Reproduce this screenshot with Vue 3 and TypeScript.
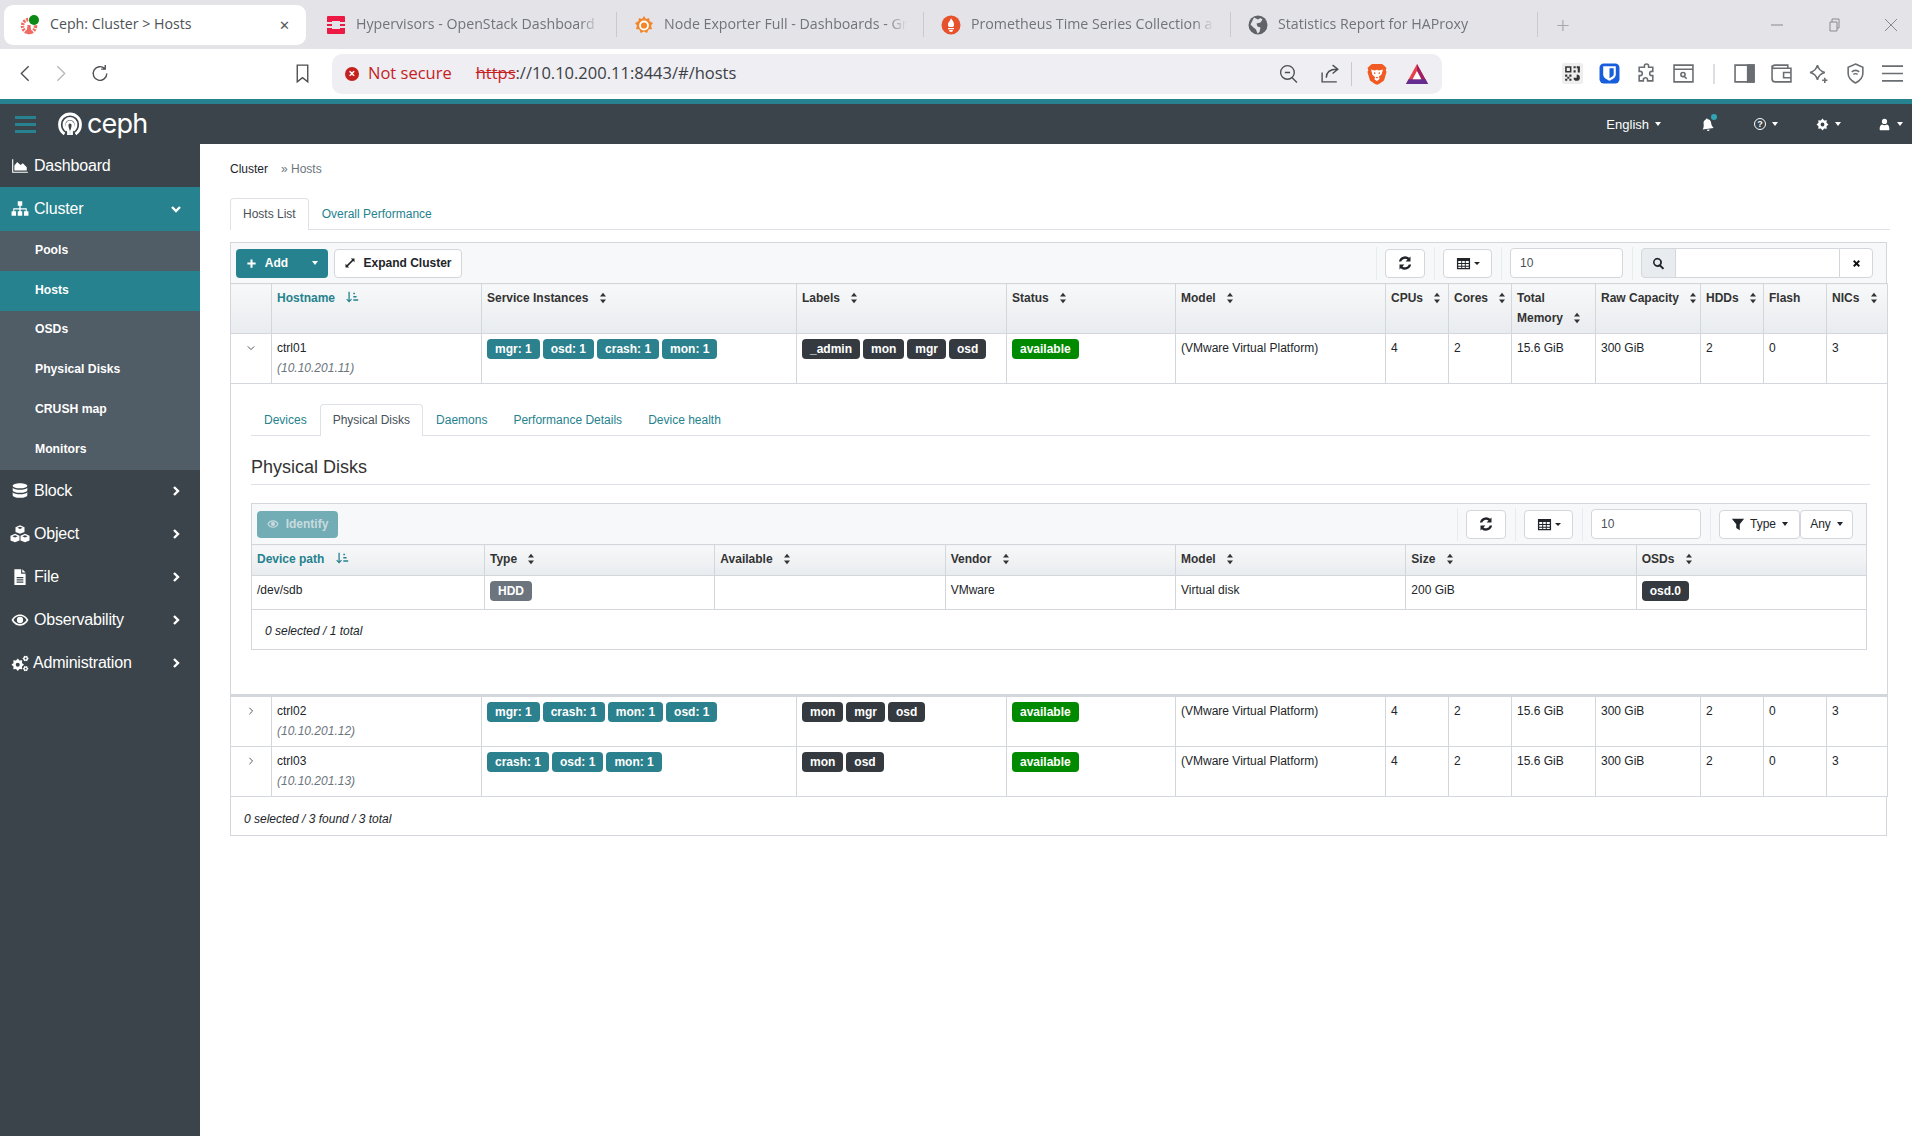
<script setup lang="ts">
// Ceph dashboard, Cluster > Hosts, inside a Brave browser window
interface BrowserTab { title: string; icon: string; active?: boolean }
interface Host {
  name: string
  ip: string
  services: string[]
  labels: string[]
  expanded?: boolean
}

// titles stop where the browser cuts them off
const tabs: BrowserTab[] = [
  { title: 'Ceph: Cluster > Hosts', icon: 'ceph', active: true },
  { title: 'Hypervisors - OpenStack Dashboard', icon: 'openstack' },
  { title: 'Node Exporter Full - Dashboards - Gr', icon: 'grafana' },
  { title: 'Prometheus Time Series Collection ar', icon: 'prometheus' },
  { title: 'Statistics Report for HAProxy', icon: 'globe' },
]

// builds a gear outline so the cog icons stay readable at small sizes
function gear(cx: number, cy: number, r: number, teeth: number): string {
  let d = ''
  for (let i = 0; i < teeth * 2; i++) {
    const a = (i * Math.PI) / teeth
    const rr = i % 2 ? r * 0.72 : r
    d += `${i ? 'L' : 'M'}${(cx + rr * Math.cos(a)).toFixed(2)} ${(cy + rr * Math.sin(a)).toFixed(2)}`
  }
  const h = r * 0.32
  return `${d}z M${cx - h} ${cy}a${h} ${h} 0 1 0 ${h * 2} 0a${h} ${h} 0 1 0 ${-h * 2} 0z`
}

const icons: Record<string, string> = {
  area: 'M1 2h1v11h13v1H1z M3 12V7.5l2.5-3 3 2.5 2-1.5 3.5 3.5V12z',
  sitemap: 'M6 1h4v4H8.6v2.4H14V10h1.5v4h-4v-4H13V8.4H8.6V10H10v4H6v-4h1.4V8.4H3V10h1.5v4h-4v-4H2V7.4h5.4V5H6z',
  database: 'M8 1c3.6 0 6.5 1 6.5 2.3S11.6 5.6 8 5.6 1.5 4.6 1.5 3.3 4.4 1 8 1z M1.5 5c1 1.2 3.6 1.9 6.5 1.9S13.5 6.2 14.5 5v2.3C14.5 8.6 11.6 9.6 8 9.6S1.5 8.6 1.5 7.3z M1.5 9c1 1.2 3.6 1.9 6.5 1.9s5.5-.7 6.5-1.9v2.7C14.5 13 11.6 14 8 14s-6.5-1-6.5-2.3z',
  cubes: 'M8 1l3.6 1.5V6.3L8 7.8 4.4 6.3V2.5z M8 2.2L5.9 3 8 3.9 10.1 3z M4 7.8l3.6 1.5v3.8L4 14.6.4 13.1V9.3z M4 9L1.9 9.8 4 10.7 6.1 9.8z M12 7.8l3.6 1.5v3.8L12 14.6l-3.6-1.5V9.3z M12 9l-2.1.8 2.1.9 2.1-.9z',
  file: 'M3 1h6v4h4v10H3z M5 8v1h6V8z M5 10v1h6v-1z M5 12v1h6v-1z M10 1l3 3h-3z',
  eye: 'M8 3C4.5 3 1.8 5.3.5 8c1.3 2.7 4 5 7.5 5s6.2-2.3 7.5-5C14.2 5.3 11.5 3 8 3z M8 4.5c2.4 0 4.6 1.4 5.8 3.5-1.2 2.1-3.4 3.5-5.8 3.5S3.4 10.1 2.2 8C3.4 5.9 5.6 4.5 8 4.5z M8 5.2a2.8 2.8 0 1 1 0 5.6 2.8 2.8 0 0 1 0-5.6z',
  cogs: `${gear(6, 9.5, 5.6, 8)} ${gear(13, 4, 2.8, 6)} ${gear(13, 13, 2.6, 6)}`,
  gear: gear(8, 8, 7.4, 8),
  refresh: 'M13.5 1.5v5H8.6l1.9-1.9A4 4 0 0 0 4.2 6.5H1.9a6.3 6.3 0 0 1 10.3-3.7z M2.5 14.5v-5h4.9l-1.9 1.9a4 4 0 0 0 6.3-1.9h2.3a6.3 6.3 0 0 1-10.3 3.7z',
  table: 'M1 2h14v12H1z M2.4 5.4v2h3.2v-2z M6.6 5.4v2h2.8v-2z M10.4 5.4v2h3.2v-2z M2.4 8.4v2h3.2v-2z M6.6 8.4v2h2.8v-2z M10.4 8.4v2h3.2v-2z M2.4 11.4v1.4h3.2v-1.4z M6.6 11.4v1.4h2.8v-1.4z M10.4 11.4v1.4h3.2v-1.4z',
  times: 'M3 5l2-2 3 3 3-3 2 2-3 3 3 3-2 2-3-3-3 3-2-2 3-3z',
  plus: 'M6.5 2h3v4.5H14v3H9.5V14h-3V9.5H2v-3h4.5z',
  expand: 'M9 2h5v5l-1.8-1.8-7 7L7 14H2V9l1.8 1.8 7-7z',
  filter: 'M1 2h14L10 8.2V15l-4-2.4V8.2z',
  sort: 'M8 1l4 5H4z M8 15l-4-5h8z',
  sortAmount: 'M3 1h1.6v10.3l1.7-1.7 1 1L3.8 14 .3 10.6l1-1L3 11.3z M9 2h2v2H9z M9 6h4v2H9z M9 10h6v2H9z',
  search: 'M6.6 1a5.6 5.6 0 0 1 4.5 8.9l3.9 3.9-1.7 1.7-3.9-3.9A5.6 5.6 0 1 1 6.6 1z M6.6 3.2a3.4 3.4 0 1 0 0 6.8 3.4 3.4 0 0 0 0-6.8z',
  user: 'M8 1a3.2 3.2 0 1 1 0 6.4A3.2 3.2 0 0 1 8 1z M3 15c-.6 0-1-.4-1-1 0-3 1-6 3-6 .8.7 1.8 1 3 1s2.2-.3 3-1c2 0 3 3 3 6 0 .6-.4 1-1 1z',
  bell: 'M8 1.5c.6 0 1 .4 1 1 2 .5 3 2 3 4 0 3 .6 4.5 2 6H2c1.4-1.5 2-3 2-6 0-2 1-3.5 3-4 0-.6.4-1 1-1z M6.5 13.5h3a1.5 1.5 0 0 1-3 0z',
}

const sideTop = { label: 'Dashboard', icon: 'area' }
const clusterLinks = ['Pools', 'Hosts', 'OSDs', 'Physical Disks', 'CRUSH map', 'Monitors']
const sideBottom = [
  { label: 'Block', icon: 'database' },
  { label: 'Object', icon: 'cubes' },
  { label: 'File', icon: 'file' },
  { label: 'Observability', icon: 'eye' },
  { label: 'Administration', icon: 'cogs' },
]

const hostColumns = [
  { label: '', width: 41 },
  { label: 'Hostname', width: 210, sorted: true },
  { label: 'Service Instances', width: 315 },
  { label: 'Labels', width: 210 },
  { label: 'Status', width: 169 },
  { label: 'Model', width: 210 },
  { label: 'CPUs', width: 63 },
  { label: 'Cores', width: 63 },
  { label: 'Total Memory', width: 84 },
  { label: 'Raw Capacity', width: 105 },
  { label: 'HDDs', width: 63 },
  { label: 'Flash', width: 63, noSort: true },
  { label: 'NICs', width: 61 },
]

const hosts: Host[] = [
  { name: 'ctrl01', ip: '10.10.201.11', services: ['mgr: 1', 'osd: 1', 'crash: 1', 'mon: 1'], labels: ['_admin', 'mon', 'mgr', 'osd'], expanded: true },
  { name: 'ctrl02', ip: '10.10.201.12', services: ['mgr: 1', 'crash: 1', 'mon: 1', 'osd: 1'], labels: ['mon', 'mgr', 'osd'] },
  { name: 'ctrl03', ip: '10.10.201.13', services: ['crash: 1', 'osd: 1', 'mon: 1'], labels: ['mon', 'osd'] },
]

const detailTabs = ['Devices', 'Physical Disks', 'Daemons', 'Performance Details', 'Device health']
const diskColumns = ['Device path', 'Type', 'Available', 'Vendor', 'Model', 'Size', 'OSDs']
</script>

<template>
  <div class="window">
    <!-- Browser tabs -->
    <div class="tabstrip">
      <div v-for="tab in tabs" :key="tab.title" class="btab" :class="{ active: tab.active }">
        <svg v-if="tab.icon === 'ceph'" class="favicon" viewBox="0 0 20 20">
          <circle cx="9" cy="11" r="6.5" fill="none" stroke="#ef6a63" stroke-width="3.5" stroke-dasharray="2 1" />
          <path d="M7.5 10h3l1 9h-5z" fill="#ef6a63" />
          <circle cx="14" cy="5" r="5" fill="#0a8a14" />
        </svg>
        <svg v-else-if="tab.icon === 'openstack'" class="favicon" viewBox="0 0 20 20">
          <path d="M2 1h16a1 1 0 0 1 1 1v5h-5V6H6v1H1V2a1 1 0 0 1 1-1z M1 9h5v2H1z M14 9h5v2h-5z M1 13h5v1h8v-1h5v5a1 1 0 0 1-1 1H2a1 1 0 0 1-1-1z" fill="#ed1944" />
        </svg>
        <svg v-else-if="tab.icon === 'grafana'" class="favicon" viewBox="0 0 20 20">
          <path d="M10 1l2 3 3-1 .6 3.2L19 8l-2 2.6L18 14l-3.4.5L13 18l-3-1.6L6.5 18l-1-3.5L2 14l1-3.4L1 8l3.4-1.8L5 3l3 1z" fill="#f1872d" />
          <circle cx="10" cy="10.5" r="4" fill="none" stroke="#fff" stroke-width="1.8" />
        </svg>
        <svg v-else-if="tab.icon === 'prometheus'" class="favicon" viewBox="0 0 20 20">
          <circle cx="10" cy="10" r="9.5" fill="#e6522c" />
          <path d="M10 3c.5 2 3 3 3 6.5 0 1-.3 2-1 2.5H8c-.7-.5-1-1.5-1-2.5C7 7 9.5 6 10 3z M7 13h6v1.3H7z M8 15h4a2 2 0 0 1-4 0z" fill="#fff" />
        </svg>
        <svg v-else class="favicon" viewBox="0 0 20 20">
          <circle cx="10" cy="10" r="9.5" fill="#5f6368" />
          <path d="M6 2.5l4 2 2.5-1.5 2 1.5-2 3-4 1 1 3 3 1-1 4.5-2 1.5-1.5-4-2.5-2-3-3z" fill="#e3e3e8" />
        </svg>
        <span class="btab-title">{{ tab.title }}</span>
        <span v-if="tab.active" class="btab-close">✕</span>
      </div>
      <span class="new-tab">+</span>
      <div class="win-controls">
        <svg viewBox="0 0 14 14"><path d="M1 7h12" /></svg>
        <svg viewBox="0 0 14 14"><path d="M3 4h7v9H3z M5 4V1h7v9h-2" /></svg>
        <svg viewBox="0 0 14 14"><path d="M1 1l12 12M13 1L1 13" /></svg>
      </div>
    </div>

    <!-- Address bar -->
    <div class="addressbar">
      <svg class="tb back" viewBox="0 0 20 20"><path d="M13 3l-7 7 7 7" /></svg>
      <svg class="tb forward" viewBox="0 0 20 20"><path d="M7 3l7 7-7 7" /></svg>
      <svg class="tb reload" viewBox="0 0 20 20"><path d="M16 10a6.5 6.5 0 1 1-2-4.7M14.5 2v3.8h-3.8" /></svg>
      <svg class="tb bookmark" viewBox="0 0 20 20"><path d="M5 2h10v16l-5-4-5 4z" /></svg>
      <div class="omnibox">
        <span class="warn-dot">×</span>
        <span class="not-secure">Not secure</span>
        <span class="url"><s>https</s>://10.10.200.11:8443/#/hosts</span>
        <svg class="tb zoomout" viewBox="0 0 20 20"><path d="M9 2.5a6.5 6.5 0 1 1 0 13 6.5 6.5 0 0 1 0-13zM6.5 9h5M13.5 14l4.500 4.500" /></svg>
        <svg class="tb share" viewBox="0 0 20 20"><path d="M2 9v9h14M6 14c0-5 3-8 10-8M12 2l5 4-5 4" /></svg>
        <span class="omni-sep"></span>
        <svg class="brave" viewBox="0 0 20 22">
          <path d="M5 1h10l2 1.500L19.500 5l-.8 2 .8 2-2.500 8.500-5 3.500-2 .8-2-.8-5-3.500L.5 9l.8-2-.8-2L3 2.500z" fill="#f15a22" />
          <path d="M4 6.500l4 1 2-.8 2 .8 4-1-1.500 5-2.500 2 .5 2.500L10 18l-2.500-1.500.5-2.500-2.500-2z" fill="#fff" />
          <path d="M7 9l2 1.200-2 .8z M13 9l-2 1.200 2 .8z M8.500 14h3L10 15.500z" fill="#f15a22" />
        </svg>
        <svg class="bat" viewBox="0 0 22 20">
          <path d="M11 0l11 20H0z" fill="#e8414a" />
          <path d="M11 0l11 20h-5L11 9z" fill="#9e1f63" />
          <path d="M0 20l2.600-4.700h16.800L22 20z" fill="#662d91" />
          <path d="M11 7l4.400 8.300H6.600z" fill="#fff" />
        </svg>
      </div>
      <div class="extensions">
        <svg class="ext" viewBox="0 0 20 20">
          <rect width="20" height="20" rx="2" fill="#eeeeee" />
          <path d="M3 3h6v6H3z M4.500 4.500v3h3v-3z M11 3h2v2h-2z M14 3h3v6h-2V5h-1z M11 7h2v2h-2z M3 11h2v2H3z M7 11h2v2H7z M5 13h2v2H5z M3 15h2v2H3z M7 15h2v2H7z" fill="#333" fill-rule="evenodd" />
          <path d="M14 11a3 3 0 1 1-3 3h3z" fill="#333" />
        </svg>
        <svg class="ext" viewBox="0 0 20 20">
          <rect x="0.500" y="0.500" width="19" height="19" rx="4" fill="#175ddc" />
          <path d="M4 3h12v8c0 3-3 4.500-6 6-3-1.500-6-3-6-6z M10 5v9.500c2-1 4-2 4-3.700V5z" fill="#fff" fill-rule="evenodd" />
        </svg>
        <svg class="tb" viewBox="0 0 20 20"><path d="M8 3a2 2 0 0 1 4 0v1h4v4h-1a2 2 0 0 0 0 4h1v5h-5v-1a2 2 0 0 0-4 0v1H3v-5h1a2 2 0 0 0 0-4H3V4h5z" /></svg>
        <svg class="tb" viewBox="0 0 20 20"><path d="M1 2h18v16H1zM1 6h18M9.500 9a2 2 0 1 1 0 4 2 2 0 0 1 0-4zM11 13l2 2" /></svg>
        <span class="ext-sep"></span>
        <svg class="tb" viewBox="0 0 20 20"><path d="M1 2h18v16H1z" /><path d="M13 2h6v16h-6z" fill="#6a6d72" /></svg>
        <svg class="tb" viewBox="0 0 20 20"><path d="M1 5a3 3 0 0 1 3-3h12v3M1 5v10a3 3 0 0 0 3 3h15V5H4a3 3 0 0 1-3-1zM12 9h7v5h-7z" /></svg>
        <svg class="tb" viewBox="0 0 20 20"><path d="M9 2c1 4 3 6 7 7-4 1-6 3-7 7-1-4-3-6-7-7 4-1 6-3 7-7zM16 14v5M13.500 16.500h5" /></svg>
        <svg class="tb" viewBox="0 0 20 20"><path d="M10 1l7 3v6c0 4-3 7-7 9-4-2-7-5-7-9V4zM6.500 8.500c2-2 5-2 7 0M8 11c1-1 3-1 4 0" /></svg>
        <svg class="tb menu" viewBox="0 0 20 20"><path d="M0 3h20M0 10h20M0 17h20" /></svg>
      </div>
    </div>

    <!-- Dashboard header -->
    <header class="navbar">
      <div class="burger"><i></i><i></i><i></i></div>
      <svg class="ceph-logo" viewBox="0 0 24 24">
        <path d="M6.500 22C3.500 20 1.500 16.500 1.500 12.500a10.500 10.500 0 0 1 21 0c0 4-2 7.500-5 9.500" />
        <path d="M9 18.500c-1.800-1.400-3-3.500-3-6a6 6 0 0 1 12 0c0 2.500-1.200 4.600-3 6" />
        <path d="M10.500 23v-4c-.7-1.700-1.500-3-1.500-6a3 3 0 0 1 6 0c0 3-.8 4.300-1.500 6v4" />
      </svg>
      <span class="ceph-word">ceph</span>
      <nav class="nav-right">
        <span class="nav-lang">English<b class="caret"></b></span>
        <span class="nav-bell">
          <svg class="ic" viewBox="0 0 16 16"><path :d="icons.bell" /></svg>
          <i class="bell-dot"></i>
        </span>
        <span class="nav-help"><span class="help-ring">?</span><b class="caret"></b></span>
        <span class="nav-gear"><svg class="ic" viewBox="0 0 16 16"><path :d="icons.gear" fill-rule="evenodd" /></svg><b class="caret"></b></span>
        <span class="nav-user"><svg class="ic" viewBox="0 0 16 16"><path :d="icons.user" /></svg><b class="caret"></b></span>
      </nav>
    </header>

    <div class="body">
      <!-- Sidebar -->
      <aside class="sidebar">
        <a class="side-item">
          <svg class="side-ic" viewBox="0 0 16 16"><path :d="icons[sideTop.icon]" /></svg>
          {{ sideTop.label }}
        </a>
        <a class="side-item cluster">
          <svg class="side-ic" viewBox="0 0 16 16"><path :d="icons.sitemap" /></svg>
          Cluster
          <svg class="chev" viewBox="0 0 12 12"><path d="M2 4l4 4 4-4" /></svg>
        </a>
        <div class="side-sub">
          <a v-for="link in clusterLinks" :key="link" class="sub-item" :class="{ current: link === 'Hosts' }">{{ link }}</a>
        </div>
        <a v-for="item in sideBottom" :key="item.label" class="side-item">
          <svg class="side-ic" :class="'ic-' + item.icon" viewBox="0 0 16 16"><path :d="icons[item.icon]" fill-rule="evenodd" /></svg>
          {{ item.label }}
          <svg class="chev" viewBox="0 0 12 12"><path d="M4 2l4 4-4 4" /></svg>
        </a>
      </aside>

      <!-- Main content -->
      <main class="content">
        <div class="crumbs"><span>Cluster</span><em>» Hosts</em></div>

        <div class="tabs">
          <a class="tab selected">Hosts List</a>
          <a class="tab">Overall Performance</a>
        </div>

        <section class="hosts">
          <div class="toolbar">
            <div class="btn-split">
              <button class="btn primary add"><svg class="ic" viewBox="0 0 16 16"><path :d="icons.plus" /></svg>Add</button>
              <button class="btn primary drop"><b class="caret"></b></button>
            </div>
            <button class="btn light expand"><svg class="ic" viewBox="0 0 16 16"><path :d="icons.expand" /></svg>Expand Cluster</button>
            <div class="tools">
              <div class="tool"><button class="btn light icon-btn"><svg class="ic refresh" viewBox="0 0 16 16"><path :d="icons.refresh" /></svg></button></div>
              <div class="tool"><button class="btn light icon-btn cols"><svg class="ic table-ic" viewBox="0 0 16 16"><path :d="icons.table" fill-rule="evenodd" /></svg><b class="caret"></b></button></div>
              <div class="tool"><input class="limit" value="10" /></div>
              <div class="tool search-group">
                <span class="addon"><svg class="ic" viewBox="0 0 16 16"><path :d="icons.search" fill-rule="evenodd" /></svg></span>
                <input class="search" />
                <span class="clear"><svg class="ic" viewBox="0 0 16 16"><path :d="icons.times" /></svg></span>
              </div>
            </div>
          </div>

          <table class="grid">
            <colgroup>
              <col v-for="col in hostColumns" :key="col.label" :style="{ width: col.width + 'px' }" />
            </colgroup>
            <thead>
              <tr>
                <th v-for="col in hostColumns" :key="col.label" :class="{ on: col.sorted }">
                  {{ col.label }}
                  <svg v-if="col.sorted" class="sort-amount" viewBox="0 0 16 16"><path :d="icons.sortAmount" /></svg>
                  <svg v-else-if="col.label && !col.noSort" class="sort" viewBox="0 0 16 16"><path :d="icons.sort" /></svg>
                </th>
              </tr>
            </thead>
            <tbody>
              <template v-for="host in hosts" :key="host.name">
                <tr class="host-row">
                  <td class="toggle">
                    <svg viewBox="0 0 10 10"><path :d="host.expanded ? 'M1 3l4 4 4-4' : 'M3 1l4 4-4 4'" /></svg>
                  </td>
                  <td>{{ host.name }}<br /><em class="ip">({{ host.ip }})</em></td>
                  <td><div class="badges"><span v-for="s in host.services" :key="s" class="badge teal">{{ s }}</span></div></td>
                  <td><div class="badges"><span v-for="l in host.labels" :key="l" class="badge dark">{{ l }}</span></div></td>
                  <td><div class="badges"><span class="badge green">available</span></div></td>
                  <td>(VMware Virtual Platform)</td>
                  <td>4</td>
                  <td>2</td>
                  <td>15.6 GiB</td>
                  <td>300 GiB</td>
                  <td>2</td>
                  <td>0</td>
                  <td>3</td>
                </tr>
                <tr v-if="host.expanded" class="detail-row">
                  <td colspan="13">
                    <div class="tabs inner">
                      <a v-for="t in detailTabs" :key="t" class="tab" :class="{ selected: t === 'Physical Disks' }">{{ t }}</a>
                    </div>
                    <h3 class="legend">Physical Disks</h3>

                    <div class="disks">
                      <div class="toolbar">
                        <button class="btn identify"><svg class="ic" viewBox="0 0 16 16"><path :d="icons.eye" fill-rule="evenodd" /></svg>Identify</button>
                        <div class="tools">
                          <div class="tool"><button class="btn light icon-btn"><svg class="ic refresh" viewBox="0 0 16 16"><path :d="icons.refresh" /></svg></button></div>
                          <div class="tool"><button class="btn light icon-btn cols"><svg class="ic table-ic" viewBox="0 0 16 16"><path :d="icons.table" fill-rule="evenodd" /></svg><b class="caret"></b></button></div>
                          <div class="tool"><input class="limit narrow" value="10" /></div>
                          <div class="tool">
                            <button class="btn light type"><svg class="ic" viewBox="0 0 16 16"><path :d="icons.filter" /></svg>Type<b class="caret"></b></button>
                            <button class="btn light any">Any<b class="caret"></b></button>
                          </div>
                        </div>
                      </div>
                      <table class="grid sub">
                        <thead>
                          <tr>
                            <th v-for="(c, i) in diskColumns" :key="c" :class="{ on: i === 0 }">
                              {{ c }}
                              <svg v-if="i === 0" class="sort-amount" viewBox="0 0 16 16"><path :d="icons.sortAmount" /></svg>
                              <svg v-else class="sort" viewBox="0 0 16 16"><path :d="icons.sort" /></svg>
                            </th>
                          </tr>
                        </thead>
                        <tbody>
                          <tr>
                            <td>/dev/sdb</td>
                            <td><span class="badge gray">HDD</span></td>
                            <td></td>
                            <td>VMware</td>
                            <td>Virtual disk</td>
                            <td>200 GiB</td>
                            <td><span class="badge dark">osd.0</span></td>
                          </tr>
                        </tbody>
                      </table>
                      <div class="count nested">0 selected / 1 total</div>
                    </div>
                  </td>
                </tr>
              </template>
            </tbody>
          </table>
          <div class="count">0 selected / 3 found / 3 total</div>
        </section>
      </main>
    </div>
  </div>
</template>

<style>
html,
body {
  margin: 0;
  background: #fff;
}
</style>

<style scoped>
.window {
  display: flex;
  flex-direction: column;
  height: 100vh;
  overflow: hidden;
  font-family: "Liberation Sans", Arial, sans-serif;
  font-size: 12px;
  color: #212529;
}

/* browser chrome */
.tabstrip {
  display: flex;
  align-items: center;
  flex: none;
  height: 49px;
  padding-left: 4px;
  background: #e3e3e8;
  box-sizing: border-box;
  font-family: "Open Sans", sans-serif;
  font-size: 14.2px;
  color: #70747a;
}
.btab {
  display: flex;
  align-items: center;
  flex: 0 0 307px;
  min-width: 0;
  box-sizing: border-box;
  height: 25px;
  padding-left: 17px;
  border-right: 1px solid #cacace;
}
.btab:first-child {
  flex-basis: 302px;
  margin-right: 6px;
  height: 40px;
  padding: 0 14px 0 16px;
  background: #fff;
  border: 0;
  border-radius: 9px;
  color: #4e5257;
}
.btab:nth-child(2) {
  flex-basis: 305px;
  padding-left: 14px;
}
.favicon {
  flex: none;
  width: 20px;
  height: 20px;
  margin-right: 10px;
}
.btab-title {
  flex: 1;
  min-width: 0;
  white-space: nowrap;
  margin-right: 16px;
  padding-bottom: 2px;
  -webkit-mask-image: linear-gradient(to right, #000 92%, transparent);
  mask-image: linear-gradient(to right, #000 92%, transparent);
}
.active .btab-title {
  -webkit-mask-image: none;
  mask-image: none;
}
.btab-close {
  font-size: 13px;
  color: #55585c;
  margin-right: 2px;
}
.new-tab {
  margin-left: 18px;
  font-size: 24px;
  font-weight: 300;
  line-height: 1;
  color: #a6a6ab;
}
.win-controls {
  display: flex;
  gap: 43px;
  margin-left: auto;
  margin-right: 14px;
}
.win-controls svg {
  width: 14px;
  height: 14px;
  fill: none;
  stroke: #8a8a8e;
  stroke-width: 1;
}
.addressbar {
  display: flex;
  align-items: center;
  flex: none;
  height: 50px;
  background: #fff;
  box-sizing: border-box;
  padding-bottom: 1px;
}
.tb {
  flex: none;
  width: 21px;
  height: 21px;
  fill: none;
  stroke: #4b4d51;
  stroke-width: 1.3;
}
.back {
  margin-left: 15px;
}
.forward {
  margin-left: 14px;
  stroke: #b9b9bc;
}
.reload {
  margin-left: 19px;
}
.bookmark {
  margin-left: 181px;
}
.omnibox {
  display: flex;
  align-items: center;
  flex: none;
  width: 1110px;
  height: 40px;
  margin-left: 19px;
  box-sizing: border-box;
  padding-left: 13px;
  background: #eeeef3;
  border-radius: 10px;
  font-family: "Open Sans", sans-serif;
  font-size: 16.5px;
}
.warn-dot {
  flex: none;
  width: 14px;
  height: 14px;
  border-radius: 50%;
  background: #c5221f;
  color: #fff;
  font-size: 12px;
  font-weight: 700;
  line-height: 13px;
  text-align: center;
}
.not-secure {
  margin-left: 9px;
  padding-bottom: 2px;
  color: #c5221f;
}
.url {
  margin-left: 24px;
  padding-bottom: 2px;
  color: #3c4043;
}
.url s {
  color: #c5221f;
}
.zoomout {
  margin-left: auto;
}
.share {
  margin-left: 21px;
}
.omni-sep {
  width: 1px;
  height: 24px;
  margin: 0 15px 0 10px;
  background: #c9c9cd;
}
.brave {
  width: 20px;
  height: 22px;
}
.bat {
  width: 22px;
  height: 20px;
  margin: 0 14px 0 19px;
}
.extensions {
  display: flex;
  align-items: center;
  margin-left: 120px;
  gap: 16px;
}
.ext {
  flex: none;
  width: 21px;
  height: 21px;
}
.ext-sep {
  width: 2px;
  height: 20px;
  margin: 0 3px;
  background: #dedee2;
}
.extensions .tb {
  stroke: #6a6d72;
  stroke-width: 1.5;
}

/* dashboard header */
.navbar {
  display: flex;
  align-items: center;
  flex: none;
  box-sizing: border-box;
  height: 45px;
  border-top: 5px solid #25828e;
  background: #3a444a;
  color: #fff;
}
.burger {
  display: flex;
  flex-direction: column;
  gap: 4px;
  width: 21px;
  margin-left: 15px;
}
.burger i {
  display: block;
  height: 3px;
  background: #25828e;
}
.ceph-logo {
  width: 24px;
  height: 24px;
  margin-left: 22px;
  fill: none;
  stroke: #fff;
  stroke-width: 2.8;
}
.ceph-word {
  margin-left: 5px;
  font-family: Inter, sans-serif;
  font-size: 27px;
  line-height: 30px;
  letter-spacing: -0.8px;
}
.nav-right {
  display: flex;
  align-items: center;
  margin-left: auto;
  font-size: 13px;
}
.nav-right .ic {
  display: block;
  width: 13px;
  height: 13px;
  fill: #fff;
}
.nav-bell .ic {
  width: 15px;
  height: 15px;
  transform: rotate(-8deg);
}
.nav-right span {
  display: flex;
  align-items: center;
}
.caret {
  display: inline-block;
  width: 0;
  height: 0;
  margin-left: 6px;
  border-top: 4px solid currentColor;
  border-left: 3px solid transparent;
  border-right: 3px solid transparent;
}
.nav-bell {
  position: relative;
  margin-left: 39px;
}
.bell-dot {
  position: absolute;
  top: -3px;
  right: -2px;
  width: 6px;
  height: 6px;
  border-radius: 50%;
  background: #2fa5b5;
}
.nav-help {
  margin-left: 39px;
}
.help-ring {
  justify-content: center;
  width: 10px;
  height: 10px;
  border: 1px solid #fff;
  border-radius: 50%;
  font-size: 9px;
  font-weight: 700;
}
.nav-gear {
  margin-left: 38px;
}
.nav-user {
  margin-left: 37px;
  margin-right: 9px;
}

/* sidebar */
.body {
  display: flex;
  flex: 1;
  min-height: 0;
}
.sidebar {
  flex: none;
  width: 200px;
  background: #3a444a;
  color: #fff;
}
.side-item {
  display: flex;
  align-items: center;
  height: 43px;
  padding-left: 11px;
  font-size: 16px;
  letter-spacing: -0.2px;
}
.side-item.cluster {
  height: 44px;
  background: #25828e;
}
.side-ic {
  flex: none;
  width: 18px;
  height: 18px;
  margin-right: 5px;
  fill: #fff;
}
.side-ic.ic-cubes {
  width: 20px;
  height: 20px;
  margin-left: -1px;
  margin-right: 4px;
}
.side-ic.ic-cogs {
  margin-right: 4px;
}
.chev {
  width: 12px;
  height: 12px;
  margin-left: auto;
  margin-right: 18px;
  fill: none;
  stroke: #fff;
  stroke-width: 2.4;
}
.side-sub {
  background: #505c66;
}
.sub-item {
  display: flex;
  align-items: center;
  box-sizing: border-box;
  height: 39.8px;
  padding-left: 35px;
  padding-bottom: 2px;
  font-size: 12.2px;
  font-weight: 700;
}
.sub-item.current {
  background: #25828e;
}

/* main area */
.content {
  flex: 1;
  min-width: 0;
  padding-left: 30px;
  padding-right: 22px;
}
.crumbs {
  margin-top: 18px;
  line-height: 14px;
}
.crumbs em {
  margin-left: 13px;
  font-style: normal;
  color: #6c757d;
}
.tabs {
  display: flex;
  margin-top: 22px;
  border-bottom: 1px solid #dee2e6;
}
.tab {
  margin-bottom: -1px;
  padding: 0 12px;
  height: 30px;
  line-height: 31px;
  color: #25828e;
  border: 1px solid transparent;
  border-bottom: 0;
  border-radius: 4px 4px 0 0;
}
.tab.selected {
  height: 31px;
  background: #fff;
  border-color: #dee2e6;
  color: #495057;
}
.hosts {
  width: 1657px;
  margin-top: 12px;
}
.toolbar {
  display: flex;
  align-items: center;
  height: 41px;
  padding-left: 5px;
  box-sizing: border-box;
  background: #f7f8f9;
  border: 1px solid #d3d7db;
  border-bottom: 0;
}
.btn {
  box-sizing: border-box;
  height: 29px;
  font: inherit;
  border-radius: 4px;
  border: 1px solid transparent;
  display: inline-flex;
  align-items: center;
  justify-content: center;
}
.btn .ic {
  width: 12px;
  height: 12px;
  fill: currentColor;
}
.primary {
  background: #25828e;
  color: #fff;
  font-weight: 700;
}
.btn-split {
  display: flex;
  width: 92px;
}
.add {
  flex: 1;
  border-radius: 4px 0 0 4px;
  padding: 0;
}
.add .ic {
  margin-right: 8px;
  width: 11px;
  height: 11px;
}
.drop {
  width: 30px;
  border-radius: 0 4px 4px 0;
  padding: 0 0 0 4px;
}
.drop .caret {
  margin: 0;
}
.light {
  background: #fff;
  border-color: #d3d7db;
  color: #212529;
}
.expand {
  width: 128px;
  margin-left: 6px;
  font-weight: 700;
  padding: 0;
}
.expand .ic {
  margin-right: 7px;
}
.tools {
  display: flex;
  align-items: center;
  margin-left: auto;
  margin-right: 4px;
}
.tool {
  display: flex;
  padding: 0 9px 0 8px;
  height: 33px;
  align-items: center;
  border-left: 1px solid #e9ecef;
}
.icon-btn {
  width: 40px;
  padding: 0;
}
.icon-btn .refresh {
  width: 16px;
  height: 16px;
}
.cols {
  width: 49px;
}
.cols .caret {
  margin-left: 3px;
  border-top-width: 3px;
}
.table-ic {
  width: 15px !important;
  height: 15px !important;
}
.limit {
  box-sizing: border-box;
  width: 113px;
  height: 30px;
  padding: 0 9px;
  font: inherit;
  color: #495057;
  border: 1px solid #d3d7db;
  border-radius: 4px;
  outline: none;
}
.limit.narrow {
  width: 110px;
}
.search-group {
  box-sizing: border-box;
  width: 250px;
}
.addon {
  display: flex;
  align-items: center;
  justify-content: center;
  flex: none;
  width: 35px;
  height: 30px;
  box-sizing: border-box;
  background: #e9ecef;
  border: 1px solid #d3d7db;
  border-radius: 4px 0 0 4px;
}
.addon .ic {
  width: 13px;
  height: 13px;
  fill: #212529;
}
.search {
  flex: 1;
  min-width: 0;
  height: 30px;
  box-sizing: border-box;
  padding: 0;
  border: 1px solid #d3d7db;
  border-left: 0;
  border-right: 0;
  outline: none;
}
.clear {
  display: flex;
  align-items: center;
  justify-content: center;
  flex: none;
  width: 34px;
  height: 30px;
  box-sizing: border-box;
  background: #fff;
  border: 1px solid #d3d7db;
  border-radius: 0 4px 4px 0;
}
.clear .ic {
  width: 11px;
  height: 11px;
  fill: #111;
}

/* tables */
.grid {
  width: 100%;
  border-collapse: collapse;
  table-layout: fixed;
}
.grid th,
.grid td {
  padding: 4px 5px 5px;
  line-height: 20px;
  border: 1px solid #d3d7db;
  text-align: left;
  vertical-align: top;
  box-sizing: border-box;
  font-weight: 400;
}
.grid th {
  font-weight: 700;
  background: linear-gradient(#f7f8f9, #e9ecef);
  color: #333;
}
.grid th.on {
  color: #25828e;
}
.sort {
  display: inline-block;
  width: 12px;
  height: 12px;
  margin-left: 5px;
  margin-right: -6px;
  vertical-align: -2px;
  fill: #333;
}
.sort-amount {
  display: inline-block;
  width: 13px;
  height: 13px;
  margin-left: 8px;
  vertical-align: -2px;
  fill: #25828e;
}
.host-row td {
  height: 50px;
}
.toggle {
  text-align: center !important;
}
.toggle svg {
  width: 8px;
  height: 8px;
  fill: none;
  stroke: #495057;
  stroke-width: 1.2;
}
.ip {
  color: #6c757d;
}
.badges {
  display: flex;
  flex-wrap: wrap;
  gap: 3px;
  padding-top: 1px;
}
.badge {
  display: inline-block;
  height: 20px;
  padding: 0 8px;
  border-radius: 4px;
  color: #fff;
  font-weight: 700;
  line-height: 20px;
}
.teal {
  background: #2b818d;
}
.dark {
  background: #343a40;
}
.green {
  background: #008a00;
}
.gray {
  background: #6c757d;
}
.grid .detail-row > td {
  padding: 20px 20px 44px 20px;
  background: #fff;
  border-bottom: 3px solid #d3d7db;
}
.tabs.inner {
  margin-top: 0;
  width: 1619px;
}
.legend {
  margin: 18px 0 0;
  padding-bottom: 4px;
  width: 1619px;
  font-size: 18px;
  font-weight: 400;
  line-height: 26px;
  color: #333;
  border-bottom: 1px solid #dee2e6;
}
.disks {
  width: 1616px;
  margin-top: 18px;
}
.grid.sub th {
  padding-bottom: 6px;
}
.grid.sub th:first-child {
  width: 233px;
}
.grid.sub td {
  height: 34px;
}
.grid.sub .badge {
  vertical-align: top;
  margin-top: 1px;
}
.identify {
  width: 81px;
  height: 27px;
  background: #72adb5;
  color: #c9dbde;
  font-weight: 700;
}
.identify .ic {
  margin-right: 7px;
}
.type {
  width: 81px;
  padding: 0;
}
.type .ic {
  width: 14px;
  height: 14px;
  margin-right: 5px;
}
.any {
  width: 53px;
  padding: 0;
}
.count {
  box-sizing: border-box;
  height: 39px;
  padding-left: 13px;
  font-style: italic;
  line-height: 44px;
  border: 1px solid #d3d7db;
  border-top: 0;
}
.count.nested {
  height: 40px;
  line-height: 42px;
}
</style>
